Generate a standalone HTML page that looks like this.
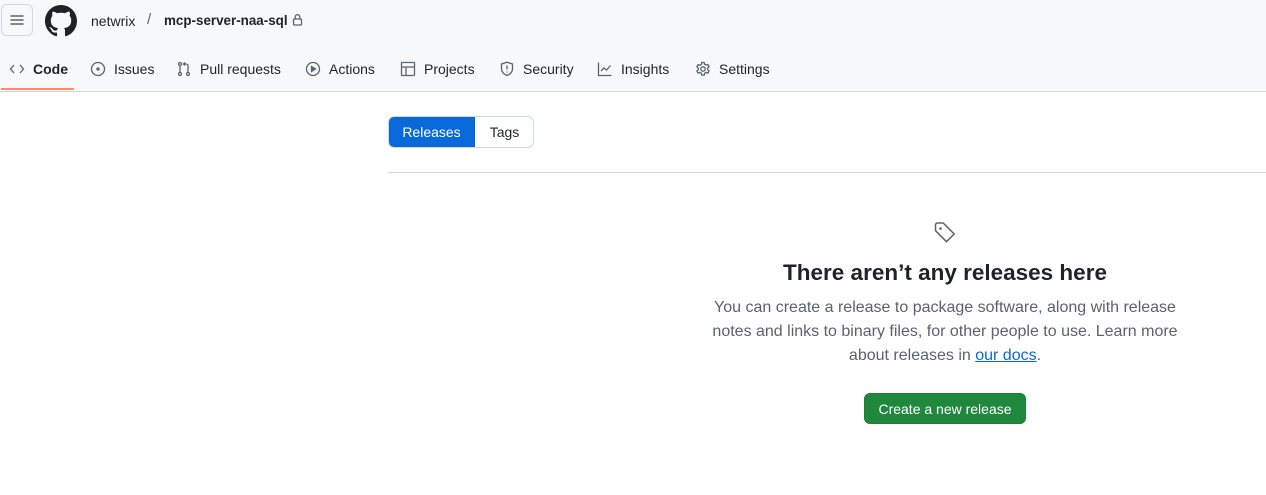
<!DOCTYPE html>
<html><head><meta charset="utf-8"><style>
*{box-sizing:border-box;margin:0;padding:0}
body{width:1266px;height:495px;background:#fff;font-family:"Liberation Sans",sans-serif;color:#1f2328;position:relative;overflow:hidden}
.hdr{position:absolute;left:0;top:0;width:1266px;height:92px;background:#f6f8fa;border-bottom:1px solid #d1d9e0}
.abs{position:absolute}
.tab{position:absolute;top:60px;font-size:14px;color:#1f2328;display:flex;align-items:center;gap:8px;height:18px}
.tab svg{fill:none;stroke:#59636e;stroke-width:1.3}
</style></head><body>
<div class="hdr">
 <div class="abs" style="left:1px;top:4px;width:32px;height:32px;border:1px solid #d1d9e0;border-radius:6px;background:#f6f8fa"></div>
 <svg class="abs" style="left:9px;top:13px" width="16" height="14"><path d="M2 3h12M2 7h12M2 11h12" stroke="#59636e" stroke-width="1.5" stroke-linecap="round"/></svg>
 <svg class="abs" style="left:45px;top:5px" width="32" height="32" viewBox="0 0 16 16"><path fill="#1f2328" d="M8 0C3.58 0 0 3.58 0 8c0 3.540 2.29 6.53 5.47 7.59.4.07.55-.17.55-.38 0-.19-.01-.82-.01-1.49-2.01.37-2.530-.49-2.69-.94-.09-.23-.48-.94-.82-1.13-.28-.15-.68-.52-.01-.53.63-.01 1.08.58 1.23.82.72 1.21 1.87.87 2.33.66.07-.52.28-.87.51-1.07-1.78-.2-3.64-.89-3.64-3.95 0-.87.31-1.59.82-2.15-.08-.2-.36-1.02.08-2.12 0 0 .67-.21 2.2.82.64-.18 1.32-.27 2-.27.68 0 1.36.09 2 .27 1.53-1.04 2.2-.82 2.2-.82.44 1.1.16 1.92.08 2.12.51.56.82 1.27.82 2.15 0 3.070-1.87 3.75-3.65 3.95.29.25.54.73.54 1.48 0 1.07-.01 1.93-.01 2.2 0 .21.15.46.55.38A8.013 8.013 0 0016 8c0-4.42-3.58-8-8-8z"/></svg>
 <div class="abs" style="left:91px;top:13px;font-size:14px;color:#1f2328">netwrix</div>
 <div class="abs" style="left:147px;top:11px;font-size:15px;color:#59636e">/</div>
 <div class="abs" style="left:164px;top:13px;font-size:13.4px;font-weight:bold">mcp-server-naa-sql</div>
 <svg class="abs" style="left:292px;top:13px" width="11" height="13"><rect x="1.5" y="6" width="8" height="6" rx="1" fill="none" stroke="#59636e" stroke-width="1.3"/><path d="M3.2 6V4a2.3 2.3 0 0 1 4.6 0v2" fill="none" stroke="#59636e" stroke-width="1.3"/></svg>

 <div class="tab" style="left:9px;font-weight:bold"><svg width="16" height="16"><path d="M5 4L1.5 8 5 12M11 4l3.5 4L11 12"/></svg>Code</div>
 <div class="abs" style="left:1px;top:88px;width:73px;height:2px;background:#fd8c73"></div>
 <div class="tab" style="left:90px"><svg width="16" height="16"><circle cx="8" cy="8" r="6.5"/><circle cx="8" cy="8" r="1" fill="#59636e"/></svg>Issues</div>
 <div class="tab" style="left:176px"><svg width="16" height="16"><circle cx="4" cy="3" r="1.5"/><circle cx="4" cy="13" r="1.5"/><circle cx="12" cy="13" r="1.5"/><path d="M4 4.5v7M12 11.5V5a2 2 0 0 0-2-2H7.5M9 1.5 7.5 3 9 4.5"/></svg>Pull requests</div>
 <div class="tab" style="left:305px"><svg width="16" height="16"><circle cx="8" cy="8" r="6.5"/><path d="M6.5 5.5v5l4-2.5z" fill="#59636e"/></svg>Actions</div>
 <div class="tab" style="left:400px"><svg width="16" height="16"><rect x="1.5" y="1.5" width="13" height="13" rx="1"/><path d="M1.5 6h13M6 6v8.5"/></svg>Projects</div>
 <div class="tab" style="left:499px"><svg width="16" height="16"><path d="M8 1.2 2.5 3v4.5c0 3.5 2.5 5.8 5.5 7 3-1.2 5.5-3.5 5.5-7V3z"/><path d="M8 4.5v4M8 10.5v1"/></svg>Security</div>
 <div class="tab" style="left:597px"><svg width="16" height="16"><path d="M1.5 1.5v13h13M4 10l3-3 2.5 2 4-4.5"/></svg>Insights</div>
 <div class="tab" style="left:695px"><svg width="16" height="16"><circle cx="8" cy="8" r="2.2"/><path d="M6.8 1.5h2.4l.4 1.8 1.5.8 1.8-.6 1.2 2.1-1.4 1.3v1.8l1.4 1.3-1.2 2.1-1.8-.6-1.5.8-.4 1.8H6.8l-.4-1.8-1.5-.8-1.8.6-1.2-2.1 1.4-1.3V7.1L1.9 5.8l1.2-2.1 1.8.6 1.5-.8z"/></svg>Settings</div>
</div>

<div class="abs" style="left:388px;top:116px;width:146px;height:32px;border:1px solid #d1d9e0;border-radius:6px;overflow:hidden;font-size:14px">
 <div class="abs" style="left:-1px;top:-1px;width:87px;height:32px;background:#0969da;color:#fff;text-align:center;line-height:33px">Releases</div>
 <div class="abs" style="left:86px;top:-1px;width:59px;height:32px;text-align:center;line-height:33px">Tags</div>
</div>
<div class="abs" style="left:388px;top:172px;width:878px;height:1px;background:#d1d9e0"></div>

<svg class="abs" style="left:933px;top:221px" width="24" height="24" viewBox="0 0 24 24"><path d="M2.5 3.5v6.2l11 11 7.7-7.7-11-11H3.5z" fill="none" stroke="#59636e" stroke-width="1.5" stroke-linejoin="round"/><circle cx="7.5" cy="7.5" r="1.3" fill="#59636e"/></svg>
<div class="abs" style="left:645px;top:260px;width:600px;text-align:center;font-size:22.5px;font-weight:bold;color:#1f2328">There aren’t any releases here</div>
<div class="abs" style="left:695px;top:296px;width:500px;text-align:center;font-size:16px;line-height:24px;color:#59636e">You can create a release to package software, along with release notes and links to binary files, for other people to use. Learn more about releases in <span style="color:#0969da;text-decoration:underline">our docs</span>.</div>
<div class="abs" style="left:864px;top:393px;width:162px;height:31px;background:#1f883d;border:1px solid #1a7f37;border-radius:6px;color:#fff;font-size:14px;text-align:center;line-height:31px">Create a new release</div>
</body></html>
